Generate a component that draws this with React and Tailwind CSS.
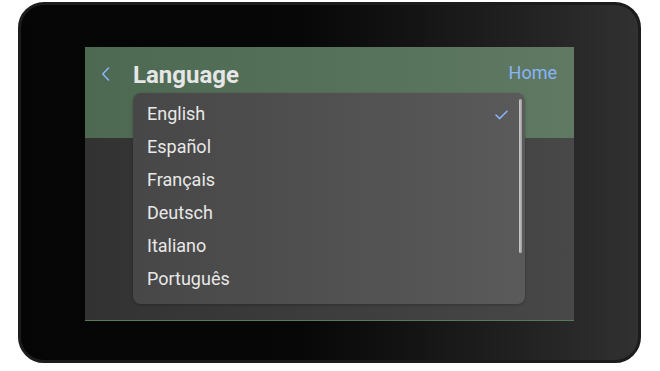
export default function App() {
  const items = ["English", "Español", "Français", "Deutsch", "Italiano", "Português"];
  return (
    <div
      className="w-[660px] h-[371px] bg-white pl-[18px] pt-[2px]"
      style={{ fontFamily: "Roboto, 'Open Sans', sans-serif" }}
    >
      <div className="w-[623px] h-[361px] rounded-[26px] border-[3px] border-[#1c1c1c] bg-gradient-to-r from-[#050505] via-[#070707] via-45% to-[#313131] pl-[64px] pt-[42px]">
        <div className="relative w-[489px] h-[274px] flex flex-col">
          <div className="h-[91px] bg-gradient-to-r from-[#4d6951] to-[#5f7963] flex items-start pt-[14px]">
            <div className="w-[48px] pl-[16px] pt-[6px]">
              <svg width="9" height="14" viewBox="0 0 9 14" fill="none">
                <path d="M7.5 1 L1.8 7 L7.5 13" stroke="#8ab4f8" strokeWidth="1.6" strokeLinecap="round" strokeLinejoin="round" />
              </svg>
            </div>
            <div className="text-[24px] leading-[28px] font-bold text-[#e6e6e6]">Language</div>
            <div className="ml-auto mr-[17px] text-[18px] leading-[24px] text-[#8ab4f8]">Home</div>
          </div>
          <div className="flex-1 bg-gradient-to-r from-[#323232] to-[#484848] border-b border-[#5a7a5e]" />
          <div className="absolute left-[48px] top-[46px] w-[392px] h-[211px] rounded-[8px] bg-gradient-to-r from-[#474747] to-[#5a5a5a] pt-[4px] shadow-[0_1px_3px_rgba(0,0,0,0.25)]">
            {items.map((t, i) => (
              <div key={t} className="h-[33px] flex items-center pl-[14px] pr-[17px]">
                <span className="text-[18px] text-[#e8e8e8]">{t}</span>
                {i === 0 && (
                  <svg className="ml-auto mt-[3px]" width="13" height="10" viewBox="0 0 13 10" fill="none">
                    <path d="M1 5 L4.5 8.6 L12 1.2" stroke="#8ab4f8" strokeWidth="1.5" strokeLinecap="round" strokeLinejoin="round" />
                  </svg>
                )}
              </div>
            ))}
            <div className="absolute right-[3px] top-[6px] w-[3px] h-[154px] rounded-full bg-gradient-to-r from-[#d0d0d0] to-[#9a9a9a]" />
          </div>
        </div>
      </div>
    </div>
  );
}
